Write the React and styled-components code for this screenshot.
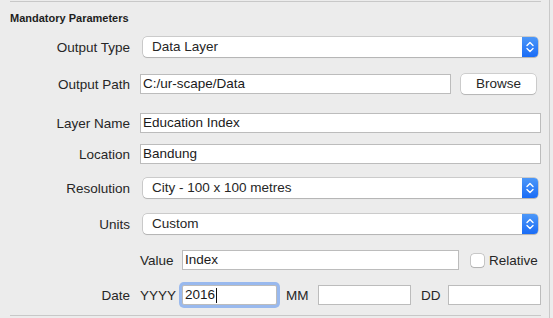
import React from 'react'
import styled, { createGlobalStyle } from 'styled-components'

const GlobalStyle = createGlobalStyle`
  body {
    margin: 0;
    background: #ececec;
    font-family: "Liberation Sans", Arial, sans-serif;
  }
`

function Stepper() {
  return (
    <StepperBox>
      <svg width="16" height="20" viewBox="0 0 16 20">
        <path d="M5 8.5 L8 5.5 L11 8.5" fill="none" stroke="#fff" strokeWidth="1.4" strokeLinecap="round" strokeLinejoin="round" />
        <path d="M5 11.5 L8 14.5 L11 11.5" fill="none" stroke="#fff" strokeWidth="1.4" strokeLinecap="round" strokeLinejoin="round" />
      </svg>
    </StepperBox>
  )
}

function PopUp({ children }) {
  return (
    <Select>
      <SelectText>{children}</SelectText>
      <Stepper />
    </Select>
  )
}

function App() {
  return (
    <Page>
      <GlobalStyle />
      <Panel>
        <Section>
          <Header>Mandatory Parameters</Header>

          <Row $top={12}>
            <Label>Output Type</Label>
            <PopUp>Data Layer</PopUp>
          </Row>

          <Row $top={17}>
            <Label>Output Path</Label>
            <TextField $width={311}>C:/ur-scape/Data</TextField>
            <Button>Browse</Button>
          </Row>

          <Row $top={19}>
            <Label>Layer Name</Label>
            <TextField>Education Index</TextField>
          </Row>

          <Row $top={11}>
            <Label>Location</Label>
            <TextField>Bandung</TextField>
          </Row>

          <Row $top={14}>
            <Label>Resolution</Label>
            <PopUp>City - 100 x 100 metres</PopUp>
          </Row>

          <Row $top={16}>
            <Label>Units</Label>
            <PopUp>Custom</PopUp>
          </Row>

          <Row $top={16}>
            <Label />
            <SubLabel>Value</SubLabel>
            <TextField $width={277}>Index</TextField>
            <Check />
            <CheckLabel>Relative</CheckLabel>
          </Row>

          <Row $top={15}>
            <Label>Date</Label>
            <SubLabel>YYYY</SubLabel>
            <TextField $width={95} $focused>
              2016<Caret />
            </TextField>
            <PartLabel $gap={9} $width={22} $after={10}>MM</PartLabel>
            <TextField $width={93} />
            <PartLabel $gap={10} $width={19} $after={8}>DD</PartLabel>
            <TextField />
          </Row>
        </Section>
      </Panel>
    </Page>
  )
}

const Page = styled.div`
  width: 553px;
  height: 318px;
  display: flex;
  background: #ececec;
  overflow: hidden;
`

const Panel = styled.div`
  width: 549px;
  height: 318px;
  border-right: 1px solid #c9c9c9;
`

const Section = styled.div`
  margin: 1px 0 0 10px;
  width: 531px;
  height: 315px;
  box-sizing: border-box;
  border-top: 1px solid #c8c8c8;
  border-bottom: 1px solid #c8c8c8;
  display: flex;
  flex-direction: column;
`

const Header = styled.div`
  padding-top: 9px;
  line-height: 14px;
  font-size: 11px;
  font-weight: bold;
  color: #1e1e1e;
`

const Row = styled.div`
  margin-top: ${props => props.$top}px;
  height: 20px;
  display: flex;
  align-items: center;
`

const Label = styled.div`
  width: 120px;
  margin-right: 10px;
  text-align: right;
  font-size: 13.5px;
  color: #262626;
  flex-shrink: 0;
`

const SubLabel = styled.div`
  width: 33px;
  margin-right: 9px;
  text-align: right;
  font-size: 13.5px;
  color: #262626;
  flex-shrink: 0;
  white-space: nowrap;
`

const PartLabel = styled.div`
  width: ${props => props.$width}px;
  margin-left: ${props => props.$gap}px;
  margin-right: ${props => props.$after}px;
  font-size: 13.5px;
  color: #262626;
  flex-shrink: 0;
  white-space: nowrap;
`

const TextField = styled.div`
  box-sizing: border-box;
  height: 20px;
  width: ${props => (props.$width ? `${props.$width}px` : 'auto')};
  flex: ${props => (props.$width ? '0 0 auto' : '1 1 auto')};
  background: #fff;
  border: 1px solid #bcbcbc;
  padding: 0 2px;
  font-size: 13.5px;
  line-height: 18px;
  color: #1a1a1a;
  display: flex;
  align-items: center;
  box-shadow: ${props => (props.$focused ? '0 0 0 3px #99b9ee' : 'none')};
  border-radius: ${props => (props.$focused ? '2px' : '0')};
`

const Caret = styled.span`
  display: inline-block;
  width: 1px;
  height: 15px;
  margin-left: 1px;
  background: #111;
`

const Select = styled.div`
  box-sizing: border-box;
  margin-left: 3px;
  width: 395px;
  height: 20px;
  display: flex;
  align-items: stretch;
  background: #fff;
  border-radius: 4px;
  box-shadow: 0 0 0 0.5px rgba(0, 0, 0, 0.28), 0 1px 1px rgba(0, 0, 0, 0.12);
`

const SelectText = styled.div`
  flex: 1;
  padding-left: 9px;
  font-size: 13.5px;
  line-height: 20px;
  color: #262626;
`

const StepperBox = styled.div`
  width: 16px;
  display: flex;
  align-items: center;
  justify-content: center;
  border-radius: 0 4px 4px 0;
  background: linear-gradient(#4c97f8, #1a6cf6);
`

const Button = styled.div`
  box-sizing: border-box;
  margin-left: 10px;
  width: 75px;
  height: 20px;
  background: #fff;
  border-radius: 4px;
  box-shadow: 0 0 0 0.5px rgba(0, 0, 0, 0.25), 0 1px 1px rgba(0, 0, 0, 0.12);
  font-size: 13.5px;
  line-height: 20px;
  text-align: center;
  color: #262626;
`

const Check = styled.div`
  box-sizing: border-box;
  margin-left: 12px;
  width: 13px;
  height: 13px;
  background: #fff;
  border-radius: 3px;
  box-shadow: 0 0 0 0.5px rgba(0, 0, 0, 0.3), 0 1px 1px rgba(0, 0, 0, 0.12);
`

const CheckLabel = styled.div`
  margin-left: 5px;
  font-size: 13.5px;
  color: #262626;
`

export default App
